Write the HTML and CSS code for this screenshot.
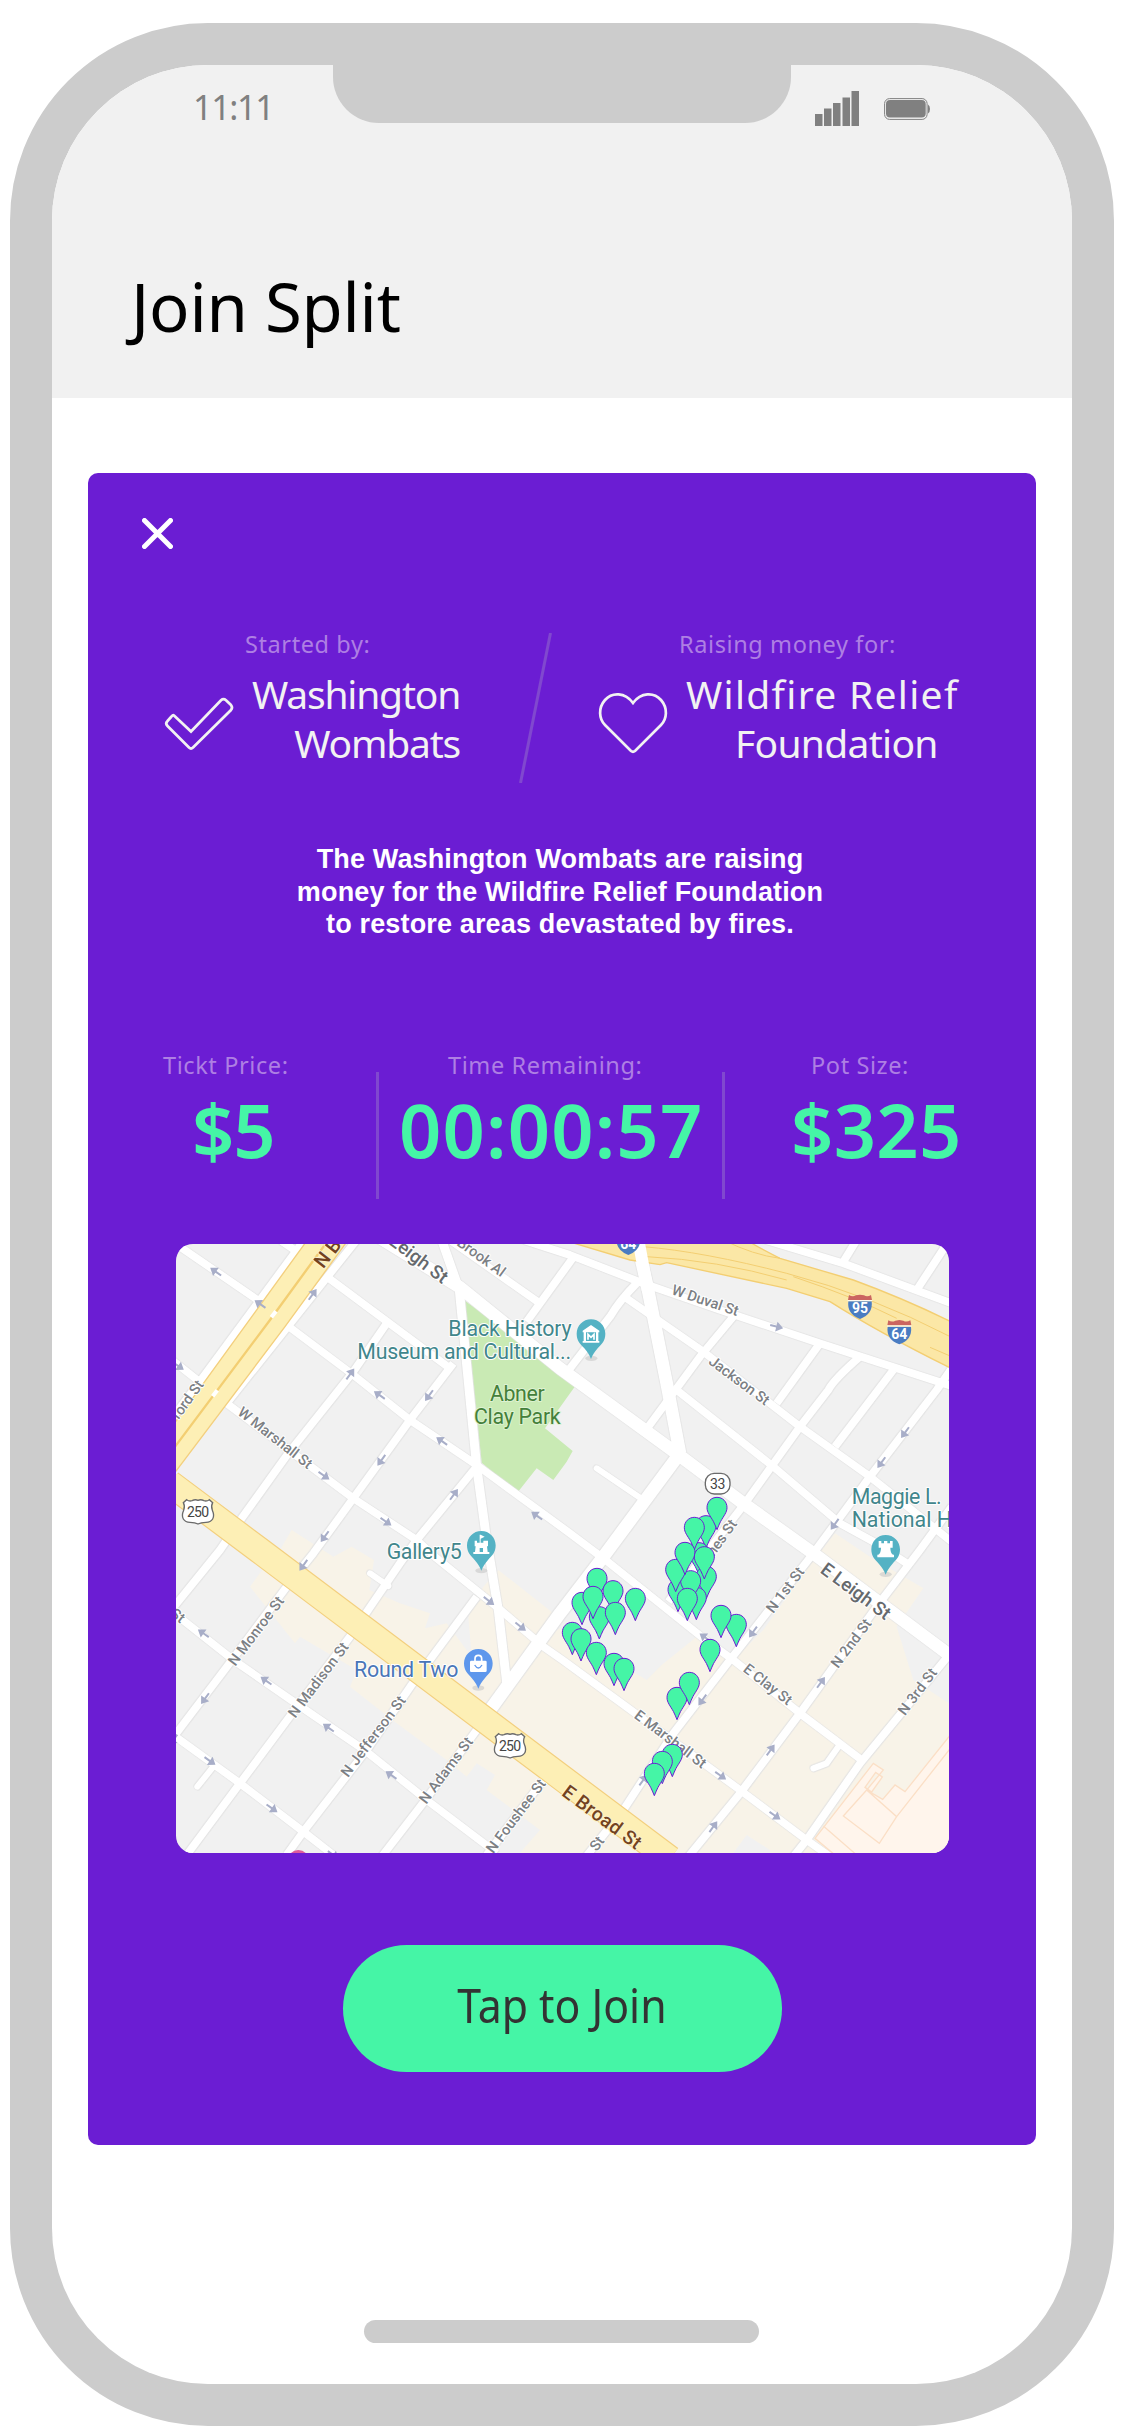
FILE: index.html
```html
<!DOCTYPE html>
<html lang="en">
<head>
<meta charset="utf-8">
<title>Join Split</title>
<link rel="stylesheet" href="styles.css">
</head>
<body>
<div class="phone">
  <div class="screen">
    <header class="header">
      <div class="status">
        <span class="time">11:11</span>
        <div class="notch"></div>
        <div class="indicators">
          <svg class="signal" viewBox="0 0 44 35"><path d="M0 23h7.500v12h-7.500zM9 17.500h7.500v17.500h-7.500zM18 12h7.500v23h-7.500zM27.500 6.500h7.500v28.500h-7.500zM36.500 0h7.500v35h-7.500z"/></svg>
          <svg class="battery" viewBox="0 0 46 22"><rect x=".6" y=".6" width="42.500" height="20.800" rx="5" class="shell"/><rect x="2" y="2" width="39.700" height="17.500" rx="4"/><path d="M44 6.500q2 1 2 4.500t-2 4.500z"/></svg>
        </div>
      </div>
      <h1 class="title">Join Split</h1>
    </header>
    <main class="card">
      <svg class="close" viewBox="0 0 31 31"><path d="M2.500 2.500l26 26M28.500 2.500l-26 26"/></svg>
      <section class="parties">
        <div class="party party-by">
          <p class="label">Started by:</p>
          <div class="who">
            <svg class="icon check" viewBox="0 0 68 52"><path d="M9 17.500L26 33.500 56 2.200Q58.500 0 61 2.200L66 7Q68 9.500 66 12L28 49.500Q26 51.500 24 49.500L2.500 28Q0 25.500 2.500 23L6.500 18.500Q8 16.700 9 17.500z"/></svg>
            <p class="name">Washington<br>Wombats</p>
          </div>
        </div>
        <svg class="slash" viewBox="0 0 34 150"><path d="M31.500 0L1.500 150"/></svg>
        <div class="party party-for">
          <p class="label">Raising money for:</p>
          <div class="who">
            <svg class="icon heart" viewBox="0 0 68 60"><path d="M34 10C26-1 13-1 6 7-1 15 0 26 6 32L32 58Q34 59.500 36 58L62 32C68 26 69 15 62 7 55-1 42-1 34 10z"/></svg>
            <p class="name name-for"><span class="wide">Wildfire Relief</span><br><span class="inset">Foundation</span></p>
          </div>
        </div>
      </section>
      <p class="blurb">The Washington Wombats are raising<br>money for the Wildfire Relief Foundation<br>to restore areas devastated by fires.</p>
      <section class="stats">
        <div class="stat stat-price"><p class="label">Tickt Price:</p><p class="value">$5</p></div>
        <div class="stat stat-time"><p class="label">Time Remaining:</p><p class="value">00:00:57</p></div>
        <div class="stat stat-pot"><p class="label">Pot Size:</p><p class="value">$325</p></div>
      </section>
      <svg class="map" viewBox="18 12 2319 1827" preserveAspectRatio="none">
        <defs>
          <path id="pin" d="M0 0C17 0 30 13 30 31 30 45 20 56 11 72Q6 82 0 97-6 82-11 72C-20 56-30 45-30 31-30 13-17 0 0 0z"/>
          <path id="arrow" d="M-20-3h19v-12l21 15-21 15v-12h-19z"/>
          <path id="poi" d="M0-43C24-43 43-24 43 0 43 22 32 31 20 44 10 55 5 64 0 76-5 64-10 55-20 44-32 31-43 22-43 0-43-24-24-43 0-43z"/>
          <g id="us"><path class="us" d="M-34-36Q-26-30-18-33-8-38 0-34 8-38 18-33 26-30 34-36L44-27Q38-16 43-4 50 12 44 22 38 32 24 32 8 32 0 37-8 32-24 32-38 32-44 22-50 12-43-4-38-16-44-27z"/><text class="num" y="16" textLength="66">250</text></g>
          <g id="inter"><path fill="#4a7cc2" d="M-35-16H35Q40 22 0 37-40 22-35-16z"/><path fill="#cb6560" d="M-33-35Q-22-28-12-34L0-36 12-34Q22-28 33-35L36-20H-36z"/><path stroke="#fff" stroke-width="3" d="M-37-18H37"/></g>
          <g id="roads">
            <path class="r" d="M18 12L270 185M330 0l55 38M470 110L840 385M350 255L550 405 720 540 920 675 1200 880 1300 955 1600 1195 1690 1260 1890 1420 2075 1560"/>
            <path class="r" d="M0 355L170 490 550 775 740 900 800 955 980 1100 1120 1220 1180 1262 1710 1650 1910 1800 1980 1850"/>
            <path class="r" d="M0 1110L190 1260 385 1395 590 1535 770 1680 980 1839M0 1478L210 1630 400 1775 490 1845M840 0L1110 190"/>
            <path class="r" d="M1060 0L1200 45 1420 130 1650 210 1950 310 2345 438M1370 175L1600 335 1890 560 2100 710 2345 905M1520 450L1810 680 2010 850 2110 905 2210 970M1770-5L2020 70 2345 190"/>
            <path class="r" d="M1070 245L1215 45M650 250L550 395 355 640 215 835 150 930 0 1115M850 370L720 540 550 775 430 940 350 1040 190 1255 0 1505"/>
            <path class="r" d="M920 680L740 900 690 970 540 1190 385 1395 210 1630 50 1845M920 1070L735 1320 590 1530 400 1775 350 1845M920 1470L770 1675 635 1850M1120 1620L950 1845"/>
            <path class="r" d="M2070 350Q1990 420 1975 450L1890 560 1725 790 1495 1085M2170 390L1995 620M1950 310L1820 490M1690 230L1590 350 1435 560M1400 130Q1350 180 1320 230L1200 385"/>
            <path class="r" d="M2345 385L2300 450 2100 710 1930 940 1680 1260 1510 1480 1360 1710 1240 1860M2345 800L2250 930 2120 1100 1890 1420 1710 1660 1555 1850M2345 1235L2070 1570 1910 1800 1870 1850M2020 65L2060 0M2240 150L2335 5"/>
            <path class="r" d="M410-10L270 180 100 410-20 570M560 0L345 270 170 490"/>
            <path class="r s" d="M1280 685L1420 780M600 1000L655 1038M130 1580L82 1640M2005 1520L1970 1570 1930 1585"/>
            <path class="r b" d="M600-25L870 142 1170 385 1520 640 1720 790 1930 940 2345 1250M1530 640L1300 950 1170 1120 960 1410M1400 0L1430 130 1490 430 1530 640"/>
            <path class="r m" d="M815 0L868 150 920 680 950 900 985 1110 1012 1345"/>
          </g>
        </defs>
        <rect width="2400" height="1900" fill="#f1f1f1"/>
        <path fill="#f8f3e8" d="M330 930L365 870 490 950 545 920 612 960 598 1050 690 1090 780 1120 765 1165 830 1150 905 1250 895 1130 940 1040 985 990 1150 1120 1110 1200 1170 1165 1430 1320 1475 1275 1580 1190 1700 1250 1780 1170 1930 960 1995 880 2100 950 2260 1045 2180 1160 2230 1320 2337 1390V1839H1050L1110 1770 950 1650 975 1605 920 1570 890 1610 830 1560 680 1450 540 1340 560 1290 390 1190 375 1210 240 1040 280 985z"/>
        <path fill="#f1f1f1" d="M1690 1839L1730 1785 1800 1830V1839z"/>
        <path fill="#c9eab4" d="M882 180L1170 392 1218 435 1125 565 1208 633 1190 665 1150 720 1100 685 1042 758 935 668z"/>
        <use href="#roads" class="casing"/>
        <use href="#roads" class="surface"/>
        <path class="highway" d="M1180 0L1380 60 1470 74 1490 68 1850 145 1980 185Q2130 280 2345 386V246Q2200 175 2050 120L1830 55Q1760 20 1730 0z"/>
        <path class="lane" d="M1420 20Q1600 35 1850 100T2345 292M1430 50Q1640 60 1850 120M1660 0Q1750 45 1830 55M2280 322L2345 350M1870 110Q2050 170 2180 235"/>
        <path d="M1405 0L1433 150" stroke="#fff" stroke-width="36"/>
        <path class="avenue" d="M405 10H527L345 260 18 693H0V568z"/>
        <path class="lane w" d="M475 0L300 240 0 640"/>
        <path stroke="#fff" stroke-width="12" d="M304 232l14-18M128 469l14-18"/>
        <path class="broad c" d="M0 730L267 930 1175 1613 1500 1857"/>
        <path class="broad" d="M0 730L267 930 1175 1613 1500 1857"/>
        <path class="building" d="M1935 1795L2110 1570 2140 1590 2090 1650 2138 1678 2175 1635 2205 1655 2345 1480V1845H1995zM2020 1728L2090 1650 2180 1730 2128 1810zM1960 1758L2060 1845M2180 1730L2345 1520M2085 1642l20 14 32-45-20-14z"/>
        <g fill="#a8aec8">
          <g><use href="#arrow" transform="translate(137 95) rotate(-145)"/><use href="#arrow" transform="translate(270 192) rotate(-145)"/><use href="#arrow" transform="translate(628 465) rotate(-145)"/><use href="#arrow" transform="translate(815 603) rotate(-145)"/><use href="#arrow" transform="translate(1100 827) rotate(-145)"/><use href="#arrow" transform="translate(100 1180) rotate(-145)"/><use href="#arrow" transform="translate(288 1322) rotate(-145)"/><use href="#arrow" transform="translate(475 1463) rotate(-145)"/><use href="#arrow" transform="translate(663 1605) rotate(-145)"/><use href="#arrow" transform="translate(1605 1192) rotate(-145)"/></g>
          <g><use href="#arrow" transform="translate(25 378) rotate(35)"/><use href="#arrow" transform="translate(462 707) rotate(35)"/><use href="#arrow" transform="translate(648 845) rotate(35)"/><use href="#arrow" transform="translate(957 1083) rotate(38)"/><use href="#arrow" transform="translate(1052 1160) rotate(38)"/><use href="#arrow" transform="translate(120 1563) rotate(35)"/><use href="#arrow" transform="translate(306 1705) rotate(35)"/><use href="#arrow" transform="translate(490 1845) rotate(35)"/><use href="#arrow" transform="translate(1652 1607) rotate(35)"/><use href="#arrow" transform="translate(1815 1727) rotate(35)"/><use href="#arrow" transform="translate(1820 260) rotate(14)"/></g>
          <g><use href="#arrow" transform="translate(428 163) rotate(-54)"/><use href="#arrow" transform="translate(541 402) rotate(-54)"/><use href="#arrow" transform="translate(852 763) rotate(-54)"/><use href="#arrow" transform="translate(1953 1327) rotate(-54)"/><use href="#arrow" transform="translate(1802 1530) rotate(-54)"/><use href="#arrow" transform="translate(1630 1760) rotate(-54)"/><use href="#arrow" transform="translate(1420 1620) rotate(-54)"/></g>
          <g><use href="#arrow" transform="translate(777 467) rotate(126)"/><use href="#arrow" transform="translate(634 661) rotate(126)"/><use href="#arrow" transform="translate(464 890) rotate(126)"/><use href="#arrow" transform="translate(400 976) rotate(126)"/><use href="#arrow" transform="translate(105 1376) rotate(126)"/><use href="#arrow" transform="translate(10 1500) rotate(126)"/><use href="#arrow" transform="translate(2205 578) rotate(126)"/><use href="#arrow" transform="translate(2134 668) rotate(126)"/><use href="#arrow" transform="translate(1994 853) rotate(126)"/><use href="#arrow" transform="translate(1749 1176) rotate(126)"/><use href="#arrow" transform="translate(1597 1380) rotate(126)"/></g>
        </g>
        <g class="street">
          <text transform="translate(993 112) rotate(36)" text-anchor="end">Brook Al</text>
          <text transform="translate(1502 162) rotate(18.500)" textLength="209">W Duval St</text>
          <text transform="translate(1613 370) rotate(36.600)" textLength="214">Jackson St</text>
          <text transform="translate(200 522) rotate(38)" textLength="270">W Marshall St</text>
          <text transform="translate(103 434) rotate(-54)" text-anchor="end">ford St</text>
          <text transform="translate(196 1280) rotate(-53)" textLength="246">N Monroe St</text>
          <text transform="translate(376 1436) rotate(-53)" textLength="269">N Madison St</text>
          <text transform="translate(534 1614) rotate(-53)" textLength="291">N Jefferson St</text>
          <text transform="translate(769 1694) rotate(-53)" textLength="236">N Adams St</text>
          <text transform="translate(970 1843) rotate(-53)" textLength="265">N Foushee St</text>
          <text transform="translate(31 1151) rotate(37)" text-anchor="end">St</text>
          <text transform="translate(1280 1836) rotate(-53)">St</text>
          <text transform="translate(1810 1122) rotate(-53)" textLength="158">N 1st St</text>
          <text transform="translate(2004 1287) rotate(-53)" textLength="171">N 2nd St</text>
          <text transform="translate(2205 1429) rotate(-53)" textLength="163">N 3rd St</text>
          <text transform="translate(1717 1292) rotate(38)" textLength="171">E Clay St</text>
          <text transform="translate(1390 1432) rotate(37)" textLength="257">E Marshall St</text>
          <text transform="translate(1703 852) rotate(-54)" text-anchor="end">James St</text>
          <g class="major">
            <text transform="translate(817 133) rotate(37)" text-anchor="end">Leigh St</text>
            <text transform="translate(1948 996) rotate(36.500)" textLength="245">E Leigh St</text>
          </g>
          <g class="brown">
            <text transform="translate(460 88) rotate(-52)">N B</text>
            <text transform="translate(1172 1664) rotate(36.500)" textLength="280">E Broad St</text>
          </g>
        </g>
        <use href="#us" x="84" y="815"/><use href="#us" x="1020" y="1517"/>
        <rect class="us" x="1606" y="700" width="74" height="62" rx="27"/><text class="num" x="1643" y="747" textLength="46">33</text>
        <use href="#inter" x="2070" y="200"/><text class="ih" x="2070" y="220">95</text>
        <use href="#inter" x="2188" y="276"/><text class="ih" x="2188" y="296">64</text>
        <use href="#inter" x="1375" y="8"/><text class="ih" x="1375" y="28">64</text>
        <g class="place">
          <text x="835" y="288" textLength="370">Black History</text>
          <text x="562" y="358" textLength="641">Museum and Cultural...</text>
          <text x="650" y="957" textLength="225">Gallery5</text>
          <text x="2045" y="792" textLength="270">Maggie L.</text>
          <text x="2045" y="862">National H</text>
          <text x="552" y="1312" textLength="313" class="shop">Round Two</text>
          <g class="park"><text x="960" y="482" textLength="164">Abner</text><text x="912" y="551" textLength="260">Clay Park</text></g>
        </g>
        <g fill="#c8c8c8" opacity=".6"><ellipse cx="1264" cy="355" rx="18" ry="8"/><ellipse cx="934" cy="992" rx="18" ry="8"/><ellipse cx="925" cy="1344" rx="18" ry="8"/><ellipse cx="2147" cy="1003" rx="18" ry="8"/></g>
        <g fill="#54b2c4"><use href="#poi" x="1263" y="281"/><use href="#poi" x="934" y="916"/><use href="#poi" x="2147" y="928"/></g>
        <use href="#poi" x="925" y="1270" fill="#5e97ec"/>
        <path fill="#fff" fill-rule="evenodd" d="M1238 272l25-17 25 17v5h-3v26h3v5h-50v-5h3v-26h-3zM1248 277v26h30v-26z"/><path d="M1254 299v-16l9 9 9-9v16" fill="none" stroke="#fff" stroke-width="5"/>
        <path fill="#fff" fill-rule="evenodd" d="M914 902h7v6h8v-24h3l12 6-12 6v12h8v-6h14v17h-3l2 17h5v6h-48v-6h5l2-17h-3zM929 924v12h10v-12z"/>
        <path fill="#fff" d="M2126 903h8v7h8v-7h10v7h8v-7h8v20h-7q0 16 8 21h3v8h-50v-8h3q8-5 8-21h-7z"/>
        <rect x="900" y="1262" width="50" height="34" rx="4" fill="#fff"/><path d="M915 1263v-7q0-10 10-10t10 10v7" fill="none" stroke="#fff" stroke-width="5"/><path d="M914 1275q11 18 22 0" fill="none" stroke="#5e97ec" stroke-width="4"/>
        <circle cx="385" cy="1862" r="32" fill="#df5b9c"/>
        <g class="pins">
          <use href="#pin" x="1608" y="827"/><use href="#pin" x="1641" y="772"/><use href="#pin" x="1587" y="908"/><use href="#pin" x="1573" y="832"/><use href="#pin" x="1524" y="1018"/><use href="#pin" x="1609" y="979"/><use href="#pin" x="1579" y="1042"/><use href="#pin" x="1562" y="992"/><use href="#pin" x="1517" y="958"/><use href="#pin" x="1545" y="907"/><use href="#pin" x="1603" y="920"/><use href="#pin" x="1552" y="1045"/>
          <use href="#pin" x="1281" y="985"/><use href="#pin" x="1329" y="1022"/><use href="#pin" x="1236" y="1057"/><use href="#pin" x="1288" y="1100"/><use href="#pin" x="1269" y="1039"/><use href="#pin" x="1336" y="1087"/><use href="#pin" x="1396" y="1045"/><use href="#pin" x="1207" y="1147"/><use href="#pin" x="1233" y="1166"/><use href="#pin" x="1279" y="1207"/><use href="#pin" x="1332" y="1240"/><use href="#pin" x="1362" y="1255"/>
          <use href="#pin" x="1699" y="1123"/><use href="#pin" x="1653" y="1096"/><use href="#pin" x="1620" y="1198"/><use href="#pin" x="1521" y="1342"/><use href="#pin" x="1558" y="1297"/><use href="#pin" x="1507" y="1513"/><use href="#pin" x="1477" y="1534"/><use href="#pin" x="1453" y="1570"/>
        </g>
      </svg>
      <button class="join"><span>Tap to Join</span></button>
    </main>
    <div class="home-bar"></div>
  </div>
</div>
</body>
</html>
```
FILE: styles.css
```css
* { box-sizing: border-box; }
body { margin: 0; background: #fff; font-family: "Noto Sans", sans-serif; }
p, h1 { margin: 0; font-weight: 400; white-space: nowrap; }
svg { display: block; flex: none; }

.phone {
  width: 1104px; height: 2403px; margin: 23px 0 0 10px;
  border: 42px solid #ccc; border-radius: 198px; background: #ccc;
}
.screen {
  height: 100%; border-radius: 156px; overflow: hidden; background: #fff;
  display: flex; flex-direction: column; align-items: center;
}
.header { width: 100%; height: 333px; background: #f1f1f1; }
.status { height: 58px; display: flex; }
.time { width: 281px; padding: 19px 0 0 141px; font-size: 34px; line-height: 46px; color: #808080; letter-spacing: -1.300px; }
.notch { width: 458px; height: 58px; background: #ccc; border-radius: 0 0 46px 46px; }
.indicators { display: flex; gap: 25px; padding: 26px 0 0 24px; fill: #808080; }
.signal { width: 44px; height: 35px; }
.battery { width: 46px; height: 22px; margin-top: 7px; }
.battery .shell { fill: none; stroke: #808080; stroke-width: 1; }
.title { margin: 138px 0 0 79px; font-size: 67px; line-height: 90px; color: #000; letter-spacing: -.2px; }

.card {
  width: 948px; height: 1672px; margin-top: 75px; padding-top: 45px;
  background: #6b1dd3; border-radius: 10px;
  display: flex; flex-direction: column; align-items: center;
}
.close { width: 31px; height: 31px; align-self: flex-start; margin-left: 54px; }
.close path { stroke: #fff; stroke-width: 5; stroke-linecap: round; }

.parties { width: 100%; height: 154px; margin-top: 80px; display: flex; }
.party-by { width: 354px; margin-left: 77px; }
.party-for { padding-left: 46px; }
.label { font-size: 23.500px; line-height: 30px; color: #ae7fe3; letter-spacing: .6px; margin-left: 80px; }
.who { display: flex; gap: 19px; margin-top: 10px; }
.icon { width: 68px; fill: none; stroke: #f2f2f2; stroke-width: 2.700; overflow: visible; }
.check { height: 52px; margin-top: 29px; }
.heart { height: 60px; margin-top: 24px; }
.name { font-size: 39px; line-height: 49.400px; color: #f2f2f2; letter-spacing: -1.200px; text-align: right; }
.name-for { text-align: left; }
.wide { letter-spacing: 1.300px; }
.inset { margin-left: 49px; letter-spacing: -.700px; }
.slash { width: 34px; height: 150px; margin-top: 4px; }
.slash path { stroke: #8048cf; stroke-width: 3; }

.blurb {
  margin: 60px 4px 0 0; font: bold 27px/32.700px "Liberation Sans", sans-serif;
  color: #fff; text-align: center; letter-spacing: .150px;
}

.stats { width: 100%; height: 149px; margin-top: 109px; display: flex; }
.stat { position: relative; }
.stat-price { width: 289px; padding-left: 75px; }
.stat-time { width: 346px; padding-left: 71px; }
.stat-pot { padding-left: 88px; }
.stat + .stat::before { content: ""; position: absolute; left: -1px; top: 22px; width: 3px; height: 127px; background: #8048cf; }
.stat .label { margin-left: 0; }
.value { margin-top: 10px; font-size: 74px; line-height: 80px; font-weight: 600; color: #45f5a6; }
.stat-price .value { margin-left: 29px; letter-spacing: -1px; }
.stat-time .value { margin-left: -49px; letter-spacing: 1.200px; }
.stat-pot .value { margin-left: -20px; letter-spacing: .3px; }

.map { width: 773px; height: 609px; margin: 45px 0 0 0; border-radius: 17px; overflow: hidden; font-family: Roboto, sans-serif; }
.map .r { fill: none; stroke-width: 23; stroke-linejoin: round; }
.map .r.s { stroke-width: 18; stroke-linecap: round; }
.map .r.m { stroke-width: 27; }
.map .r.b { stroke-width: 38; }
.surface { stroke: #fff; }
.casing { stroke: #e2e2e2; filter: drop-shadow(2px 2px 0 #e2e2e2) drop-shadow(-2px -2px 0 #e2e2e2); }
.highway { fill: #fbe7a6; stroke: #f3ce72; stroke-width: 4; }
.avenue { fill: #fdefb5; stroke: #f3cf7e; stroke-width: 4; }
.lane { fill: none; stroke: #f3ce72; stroke-width: 3; }
.lane.w { stroke-width: 7; }
.broad { fill: none; stroke: #fdefb5; stroke-width: 75; }
.broad.c { stroke: #f3cf7e; stroke-width: 82; }
.building { fill: #fff5ec; stroke: #fbdfc6; stroke-width: 4; }
.street { font-size: 44px; font-weight: 500; fill: #7c8084; stroke: #fff; stroke-width: 6; paint-order: stroke; stroke-linejoin: round; }
.major { font-size: 56px; fill: #65696d; }
.brown { font-size: 58px; fill: #73431f; stroke: #fdf3cc; }
.us { fill: #fff; stroke: #6b6b6b; stroke-width: 4; }
.num { font-size: 42px; fill: #444; text-anchor: middle; }
.ih { font-size: 42px; font-weight: 700; fill: #fff; text-anchor: middle; }
.place { font-size: 64px; fill: #41868c; stroke: #fff; stroke-width: 6; paint-order: stroke; stroke-linejoin: round; }
.shop { fill: #4a76b8; }
.park { fill: #44803a; stroke: #def2d2; }
.pins { fill: #45f5a6; stroke: #6b1dd3; stroke-width: 3; }

.join {
  width: 439px; height: 127px; margin-top: 92px; padding: 0 0 7px;
  border: 0; border-radius: 64px; background: #45f5a6;
  font: 47px "Noto Sans", sans-serif; color: #333;
}
.join span { display: inline-block; transform: scaleX(.91); }
.home-bar { width: 395px; height: 23px; margin: 175px 2px 0 0; border-radius: 12px; background: #ccc; }
```
